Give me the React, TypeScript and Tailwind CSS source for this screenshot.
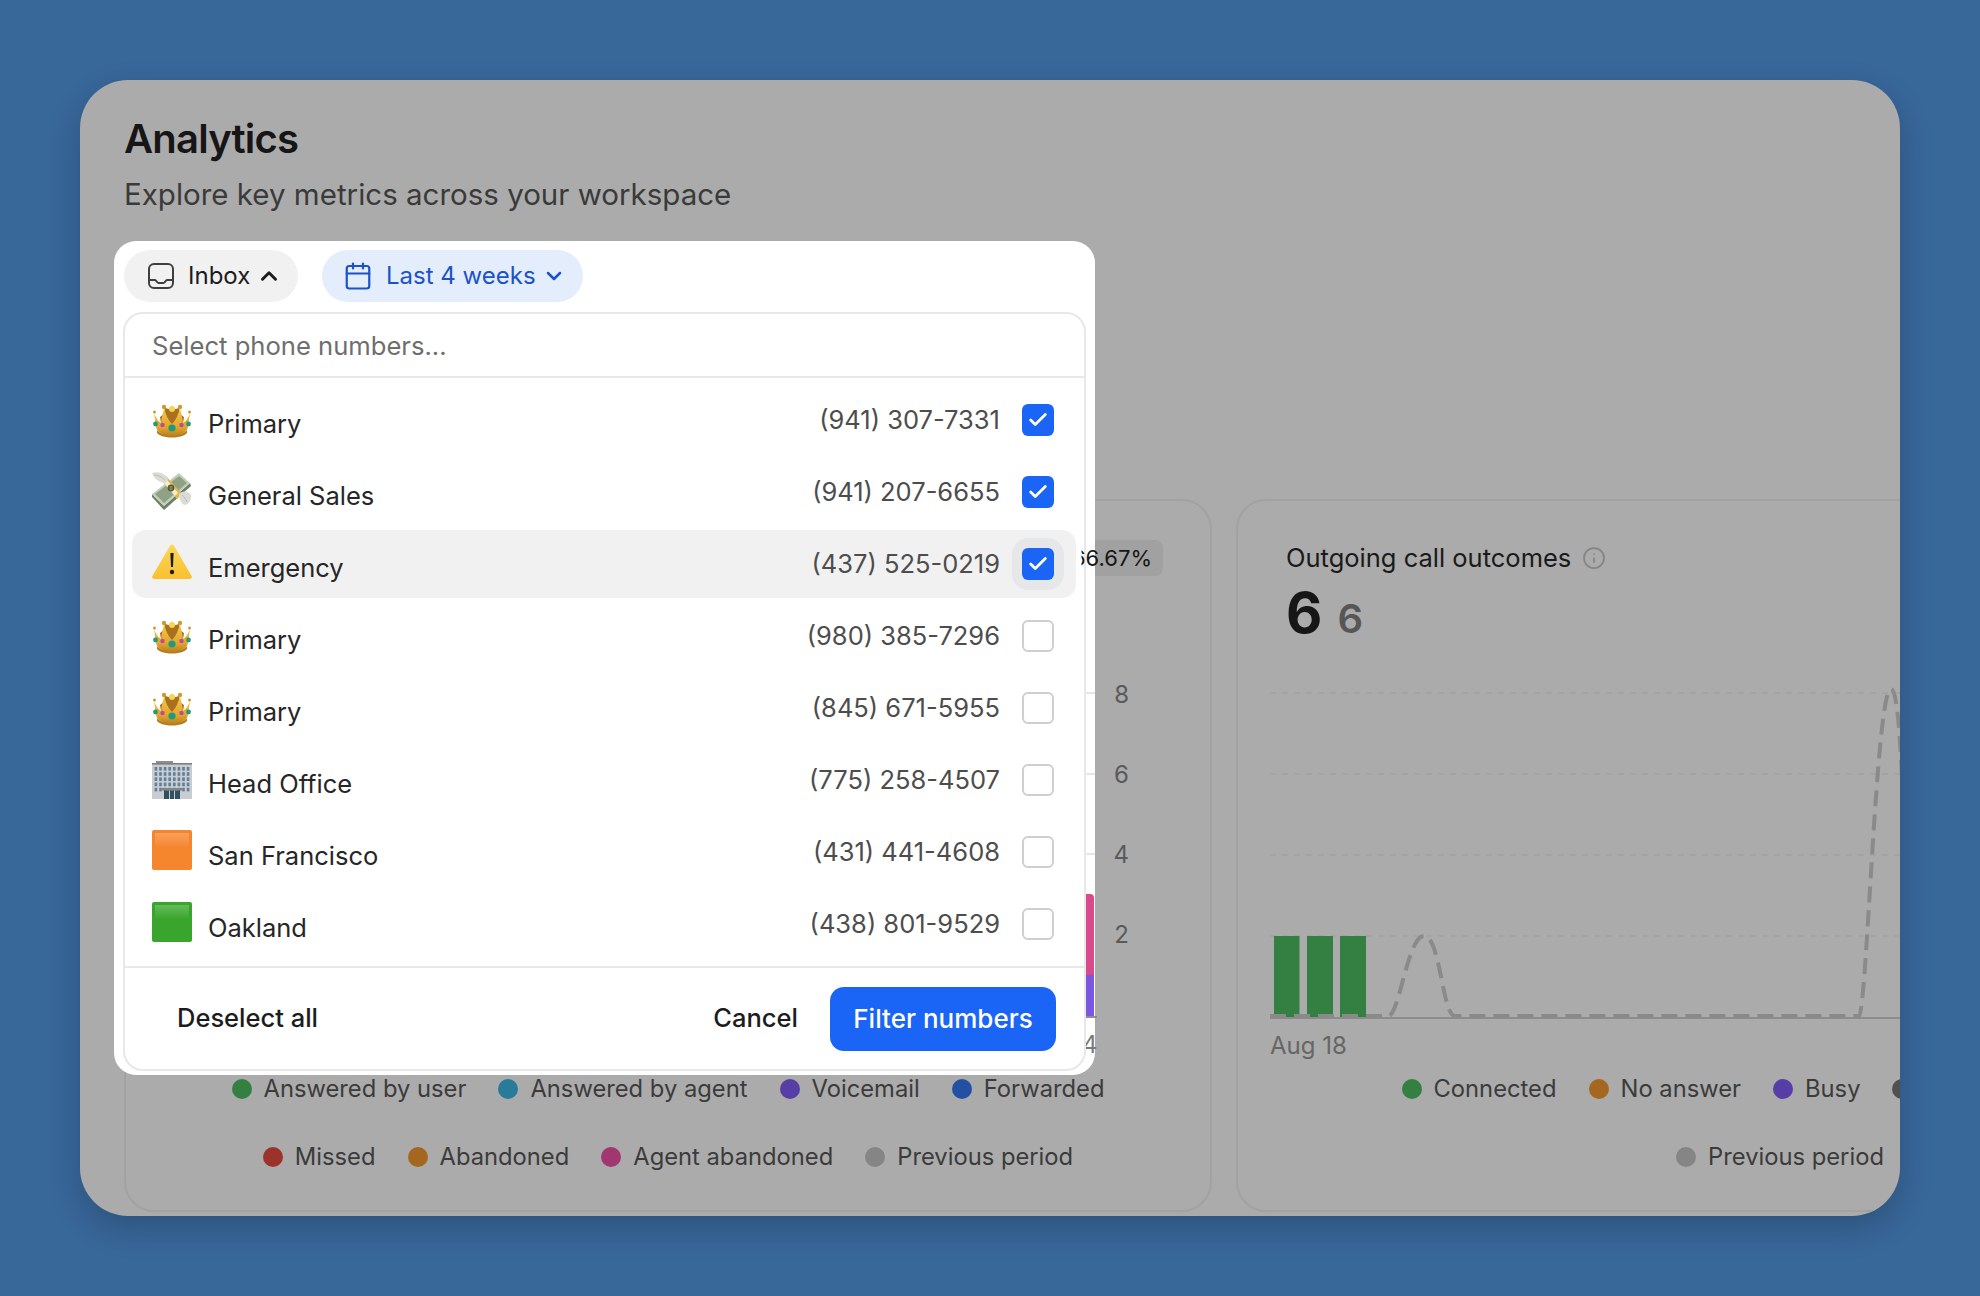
import React from 'react';
import { Calendar, ChevronDown, ChevronUp, Check, Info } from 'lucide-react';

const Crown = () => (
  <svg viewBox="0 0 40 40" className="w-10 h-10 shrink-0">
    <defs>
      <linearGradient id="crownGold" x1="0" y1="0" x2="0" y2="1">
        <stop offset="0" stopColor="#f5c94a" />
        <stop offset="0.7" stopColor="#e0a52c" />
        <stop offset="1" stopColor="#b97f1c" />
      </linearGradient>
    </defs>
    <path d="M8 17 C12 15 14 10 12 7 C17 10 18 9 20 7 C22 9 24 10 28 7 C26 10 28 15 32 17 L30 30 L10 30 Z" fill="#a8701f" />
    <path d="M2 13 L4 26 C4 32 12 36 20 36 C28 36 36 32 36 26 L38 13 C36 18 34 21 31 23 C30 17 29 12 28 8 C26 15 24 20 20 24 C16 20 14 15 12 8 C11 12 10 17 9 23 C6 21 4 18 2 13 Z" fill="url(#crownGold)" />
    <path d="M5 30 C10 37 30 37 35 30 L35 33 C30 39 10 39 5 33 Z" fill="#b57c1b" />
    <circle cx="20" cy="9" r="3" fill="#f6d44e" />
    <circle cx="12" cy="7" r="2.2" fill="#cf9a2e" />
    <circle cx="28" cy="7" r="2.2" fill="#cf9a2e" />
    <circle cx="2.5" cy="12" r="1.5" fill="#cf9a2e" />
    <circle cx="37.5" cy="12" r="1.5" fill="#cf9a2e" />
    <circle cx="20" cy="28" r="3.6" fill="#1f9a80" />
    <circle cx="10.5" cy="25" r="2.2" fill="#c0479f" />
    <circle cx="29.5" cy="25" r="2.2" fill="#c0479f" />
    <circle cx="3.5" cy="24" r="2.4" fill="#1f9a80" />
    <circle cx="36.5" cy="24" r="2.4" fill="#1f9a80" />
  </svg>
);

const Money = () => (
  <svg viewBox="0 0 40 40" className="w-10 h-10 shrink-0">
    {/* stack of notes, seen from below */}
    <path d="M0 25 L12 38 L39 14 L38 11 L12 34 L0 22 Z" fill="#6e7f68" />
    <path d="M0 22 L27 1 L38 11 L12 34 Z" fill="#c3ceb8" />
    <path d="M3 22 L27 4 L35 11 L12 31 Z" fill="#8fa285" />
    <path d="M9 8 L14 4 L30 22 L25 27 Z" fill="#e3b84f" />
    <path d="M12 11 L15 8 L26 21 L23 24 Z" fill="#f3ecd2" />
    <circle cx="19" cy="16" r="3.4" fill="#4e5d48" />
    <path d="M17.6 15 H20.4 M17.6 17 H20.4" stroke="#e3b84f" strokeWidth="0.8" />
    {/* wings */}
    <path d="M0 1 C6 -1 14 1 16 8 L12 11 C7 10 2 7 0 1 Z" fill="#dcdcd6" />
    <path d="M2 3 C6 3 10 5 13 8" fill="none" stroke="#b5b5ae" strokeWidth="0.8" />
    <path d="M27 22 C31 18 37 19 39 23 C40 28 36 33 32 33 C29 31 27 27 27 22 Z" fill="#dcdcd6" />
    <path d="M30 23 C32 25 34 27 35 30" fill="none" stroke="#b5b5ae" strokeWidth="0.8" />
  </svg>
);

const Warning = () => (
  <svg viewBox="0 0 40 40" className="w-10 h-10 shrink-0">
    <defs>
      <linearGradient id="warnFill" x1="0" y1="0" x2="0" y2="1">
        <stop offset="0" stopColor="#fbd75a" />
        <stop offset="1" stopColor="#f9c02f" />
      </linearGradient>
    </defs>
    <path d="M18.2 1.5 C19 0 21 0 21.8 1.5 L39.6 32 C40.4 33.6 39.4 35 37.8 35 L2.2 35 C0.6 35 -0.4 33.6 0.4 32 Z" fill="url(#warnFill)" />
    <path d="M18.4 9 H21.6 L21 23 H19 Z" fill="#1c1c1c" />
    <circle cx="20" cy="28" r="2.2" fill="#1c1c1c" />
  </svg>
);

const Building = () => {
  const cols = [0, 1, 2, 3, 4, 5, 6, 7];
  const rows = [0, 1, 2, 3, 4];
  return (
    <svg viewBox="0 0 40 40" className="w-10 h-10 shrink-0">
      <rect x="4" y="1" width="17" height="4" fill="#8d8d8b" />
      <rect x="0" y="3" width="40" height="36" fill="#c9cdd0" />
      <rect x="0" y="3" width="40" height="1.6" fill="#7f7f7d" />
      {rows.map(r => cols.map(c => (
        <rect key={`${r}-${c}`} x={2.6 + c * 4.6} y={7 + r * 5.2} width="2.6" height="3.6" fill="#5f7f9c" />
      )))}
      <rect x="9" y="28" width="22" height="2.5" fill="#85857f" />
      <rect x="12" y="30.5" width="16" height="8.5" fill="#2f4f62" />
      <rect x="17" y="30.5" width="1" height="8.5" fill="#c9cdd0" />
      <rect x="22" y="30.5" width="1" height="8.5" fill="#c9cdd0" />
    </svg>
  );
};

const OrangeSquare = () => (
  <div className="w-10 h-10 shrink-0 -translate-y-[2px] rounded-[2px] bg-[#f5862e] p-[3px]">
    <div className="w-full h-[14px] bg-gradient-to-b from-[#f9a05c] to-[#f5862e]" />
  </div>
);

const GreenSquare = () => (
  <div className="w-10 h-10 shrink-0 -translate-y-[2px] rounded-[2px] bg-[#3aa52c] p-[3px]">
    <div className="w-full h-[14px] bg-gradient-to-b from-[#63bb58] to-[#3aa52c]" />
  </div>
);

const numbers = [
  { icon: <Crown />, name: 'Primary', phone: '(941) 307-7331', checked: true },
  { icon: <Money />, name: 'General Sales', phone: '(941) 207-6655', checked: true },
  { icon: <Warning />, name: 'Emergency', phone: '(437) 525-0219', checked: true, active: true },
  { icon: <Crown />, name: 'Primary', phone: '(980) 385-7296' },
  { icon: <Crown />, name: 'Primary', phone: '(845) 671-5955' },
  { icon: <Building />, name: 'Head Office', phone: '(775) 258-4507' },
  { icon: <OrangeSquare />, name: 'San Francisco', phone: '(431) 441-4608' },
  { icon: <GreenSquare />, name: 'Oakland', phone: '(438) 801-9529' },
];

const LegendItem = ({ color, label }: { color: string; label: string }) => (
  <div className="flex items-center gap-[12px] shrink-0">
    <span className={`w-5 h-5 rounded-full shrink-0 ${color}`} />
    <span className="text-[23.75px] leading-[28px] text-[#3b3b3b]">{label}</span>
  </div>
);

const OutcomeChart = () => (
  <svg width="1020" height="340" viewBox="0 0 1020 340" className="block mt-[39px] shrink-0">
    {[7, 88, 169, 250].map(y => (
      <line key={y} x1="0" x2="1020" y1={y} y2={y} stroke="#a4a4a4" strokeWidth="2" strokeDasharray="6 6" />
    ))}
    <rect x="4" y="250" width="25.5" height="82" fill="#338042" />
    <rect x="37" y="250" width="26" height="82" fill="#338042" />
    <rect x="70" y="250" width="26" height="82" fill="#338042" />
    <line x1="0" x2="1020" y1="332" y2="332" stroke="#8c8c8c" strokeWidth="2" />
    <path
      d="M0 330 L119 330 C130 325 138 250 154 250 C170 250 172 325 184 330 L589 330 C597 325 606 3 621 3 C627 3 630 50 632 90"
      fill="none"
      stroke="#8a8a8a"
      strokeWidth="4"
      strokeDasharray="16 8"
    />
  </svg>
);

export default function App() {
  return (
    <div className="w-[1980px] h-[1296px] bg-[#38679a] p-[80px] overflow-hidden font-['Inter',sans-serif]">
      <div className="relative w-[1820px] h-[1136px] bg-[#ababab] rounded-[48px] overflow-hidden shadow-[0_12px_32px_rgba(0,0,0,0.2)] pl-[44px] pt-[35px]">
        <h1 className="text-[40px] leading-[48px] font-semibold tracking-[-0.02em] text-[#161616]">Analytics</h1>
        <p className="mt-[13px] text-[29.5px] leading-[36px] text-[#3a3a3a]">Explore key metrics across your workspace</p>

        <div className="flex gap-[24px] mt-[287px]">
          {/* left card, mostly behind the popover */}
          <div className="w-[1088px] h-[713px] shrink-0 border-2 border-[#a2a2a2] rounded-[30px] flex flex-col">
            <div className="flex justify-end pt-[39px] pr-[47px]">
              <div className="h-9 w-[110px] rounded-lg bg-[#a1a1a1]" />
            </div>
            <div className="flex flex-col items-end gap-[52px] pr-[81px] mt-[105px] text-[24px] leading-[28px] text-[#5a5a5a]">
              <span>8</span>
              <span>6</span>
              <span>4</span>
              <span>2</span>
            </div>
            <div className="flex flex-col gap-[40px] items-center mt-[126px]">
              <div className="flex gap-[32px]">
                <LegendItem color="bg-[#338042]" label="Answered by user" />
                <LegendItem color="bg-[#287b99]" label="Answered by agent" />
                <LegendItem color="bg-[#573ea6]" label="Voicemail" />
                <LegendItem color="bg-[#2450a3]" label="Forwarded" />
              </div>
              <div className="flex gap-[32px]">
                <LegendItem color="bg-[#9c322c]" label="Missed" />
                <LegendItem color="bg-[#a5671f]" label="Abandoned" />
                <LegendItem color="bg-[#a13670]" label="Agent abandoned" />
                <LegendItem color="bg-[#858585]" label="Previous period" />
              </div>
            </div>
          </div>

          {/* right card, runs off the edge */}
          <div className="w-[1088px] h-[713px] shrink-0 border-2 border-[#a2a2a2] rounded-[30px] flex flex-col px-[32px] pt-[41px]">
            <div className="flex items-center gap-[11px] pl-[16px]">
              <span className="text-[25.5px] leading-[32px] text-[#1a1a1a]">Outgoing call outcomes</span>
              <Info size={24} strokeWidth={1.75} className="text-[#858585]" />
            </div>
            <div className="flex items-baseline gap-[15px] pl-[16px] mt-[11px]">
              <span className="text-[56px] leading-[56px] font-bold text-[#161616]">6</span>
              <span className="text-[40px] leading-[56px] font-semibold text-[#565656]">6</span>
            </div>
            <OutcomeChart />
            <span className="mt-[6px] text-[24px] leading-[28px] text-[#666666]">Aug 18</span>
            <div className="flex flex-col gap-[40px] items-center mt-[15px]">
              <div className="flex gap-[32px]">
                <LegendItem color="bg-[#338042]" label="Connected" />
                <LegendItem color="bg-[#a5671f]" label="No answer" />
                <LegendItem color="bg-[#573ea6]" label="Busy" />
                <div className="w-[266px] flex items-center h-[28px]">
                  <span className="w-5 h-5 rounded-full bg-[#505050]" />
                </div>
              </div>
              <div className="flex gap-[32px]">
                <LegendItem color="bg-[#858585]" label="Previous period" />
              </div>
            </div>
          </div>
        </div>

        {/* popover with spotlight edge */}
        <div className="absolute left-[34px] top-[161px] w-[981px] h-[834px] bg-white rounded-[22px] px-[9px] pt-[9px] pb-[4px] flex flex-col">
          {/* chart bits showing through the spotlight edge */}
          <div className="absolute left-[969px] top-[653px] w-[11px] h-[81px] bg-[#d84a8a] rounded-tr-[4px]" />
          <div className="absolute left-[969px] top-[734px] w-[11px] h-[41px] bg-[#7a57e0]" />
          <div className="absolute left-[969px] top-[775px] w-[14px] h-[2px] bg-[#8f8f8f]" />
          <div className="absolute left-[969px] top-[451px] w-[12px] border-t-2 border-dashed border-[#e6e6e6]" />
          <div className="absolute left-[969px] top-[532px] w-[12px] border-t-2 border-dashed border-[#e6e6e6]" />
          <div className="absolute left-[969px] top-[612px] w-[12px] border-t-2 border-dashed border-[#e6e6e6]" />
          <span className="absolute left-[968px] top-[790px] text-[24px] leading-[28px] text-[#7a7a7a]">4</span>

          <div className="flex gap-[24px] pl-[1px]">
            <button className="h-[52px] w-[174px] rounded-full bg-[#f1f1f1] flex items-center pl-[23px] text-[24px] text-[#1c1c1c]">
              <svg width="28" height="28" viewBox="0 0 28 28" fill="none" stroke="#3f3f3f" strokeWidth="2" className="shrink-0">
                <rect x="2" y="2" width="24" height="24" rx="5" />
                <path d="M2 18 H8 C9.5 18 9.5 21 11.5 21 H16.5 C18.5 21 18.5 18 20 18 H26" />
              </svg>
              <span className="ml-[13px]">Inbox</span>
              <ChevronUp size={26} strokeWidth={2.75} className="ml-[6px] text-[#1c1c1c]" />
            </button>
            <button className="h-[52px] w-[261px] rounded-full bg-[#e4edfc] flex items-center pl-[21px] text-[24px] text-[#1a53c9]">
              <Calendar size={30} strokeWidth={1.75} className="shrink-0" />
              <span className="ml-[13px]">Last 4 weeks</span>
              <ChevronDown size={24} strokeWidth={2.5} className="ml-[6px]" />
            </button>
          </div>

          <div className="relative mt-[10px] flex-1 bg-white border-2 border-[#e8e8e8] rounded-[20px] flex flex-col overflow-hidden">
            <div className="h-[64px] shrink-0 flex items-center pl-[27px] pt-[2px] border-b-2 border-[#e8e8e8]">
              <input
                placeholder="Select phone numbers..."
                className="w-full outline-none bg-transparent text-[25.6px] placeholder:text-[#6e6e6e]"
              />
            </div>

            <div className="flex flex-col gap-[4px] pl-[7px] pr-[8px] pt-[8px] pb-[8px] border-b-2 border-[#e8e8e8]">
              {numbers.map((n, i) => (
                <div key={i} className={`h-[68px] rounded-[14px] flex items-center pl-[20px] pr-[22px] ${n.active ? 'bg-[#f1f1f1]' : ''}`}>
                  {n.icon}
                  <span className="ml-[16px] mt-[8px] text-[25.5px] leading-[32px] text-[#262626]">{n.name}</span>
                  <span className="ml-auto text-[25.5px] leading-[32px] text-[#4d4d4d]">{n.phone}</span>
                  <div className="relative ml-[22px] w-8 h-8 shrink-0">
                    {n.active && <div className="absolute -inset-[10px] rounded-2xl bg-[#e6e7e9]" />}
                    {n.checked ? (
                      <div className="relative w-8 h-8 rounded-[6px] bg-[#1b65f6] flex items-center justify-center">
                        <Check size={22} strokeWidth={3} className="text-white" />
                      </div>
                    ) : (
                      <div className="relative w-8 h-8 rounded-[6px] bg-white border-2 border-[#cfcfcf]" />
                    )}
                  </div>
                </div>
              ))}
            </div>

            <div className="flex-1 flex items-center pl-[52px] pr-[28px] text-[25.5px] font-medium">
              <button className="text-[#1c1c1c]">Deselect all</button>
              <button className="ml-auto text-[#1c1c1c]">Cancel</button>
              <button className="ml-[32px] w-[226px] h-16 rounded-[14px] bg-[#1b65f6] text-white text-[26px]">Filter numbers</button>
            </div>
          </div>

          {/* badge from the card behind, only its tail shows past the panel */}
          <span className="absolute z-10 right-[-57px] top-[299px] text-[22px] leading-9 text-[#161616] [clip-path:inset(0_0_0_9.5px)]">66.67%</span>
        </div>
      </div>
    </div>
  );
}
